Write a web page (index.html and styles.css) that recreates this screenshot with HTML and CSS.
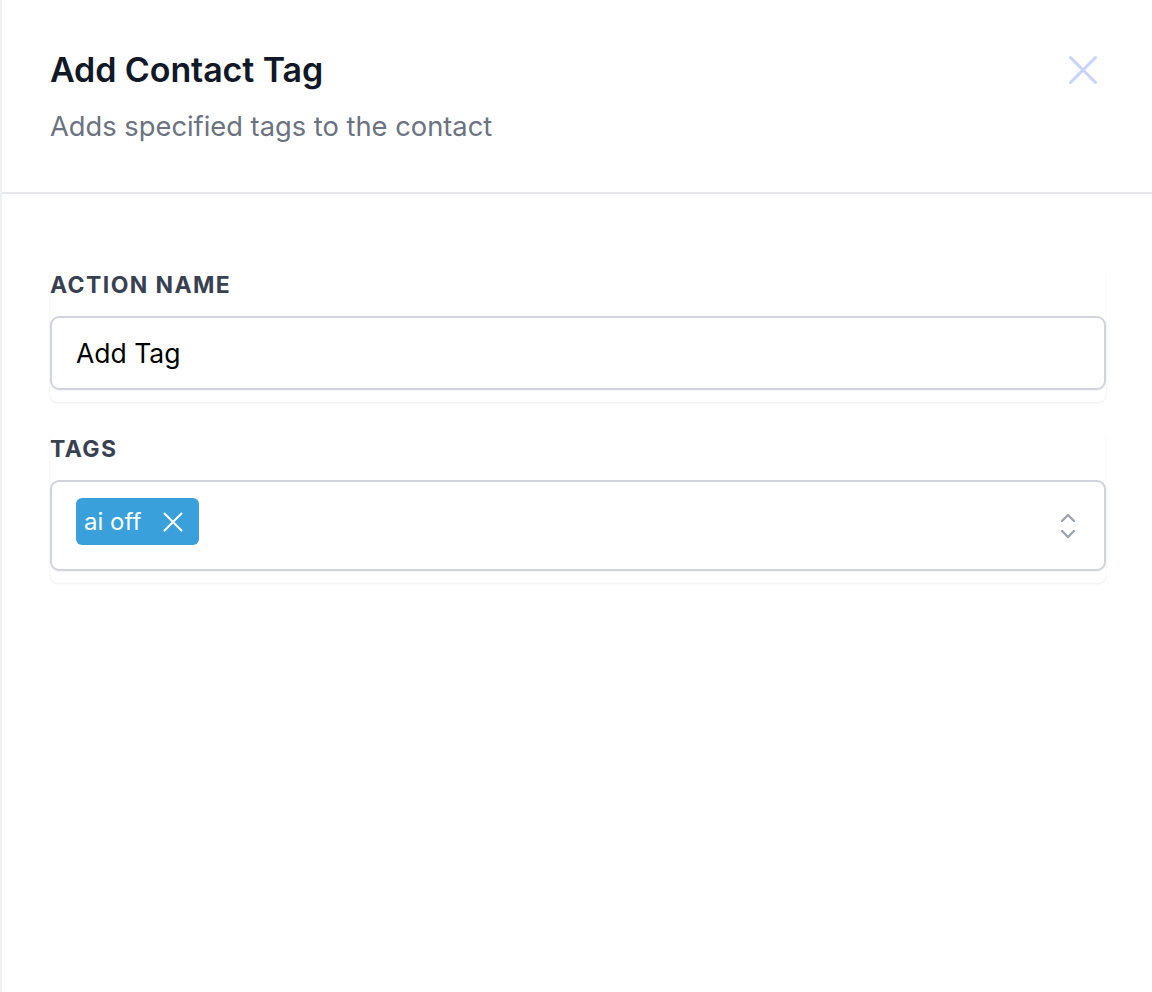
FILE: index.html
```html
<!DOCTYPE html>
<html>
<head>
<meta charset="utf-8">
<link rel="stylesheet" href="styles.css">
</head>
<body>
<div class="panel">
  <header class="head">
    <div class="head-text">
      <h1 class="title">Add Contact Tag</h1>
      <p class="subtitle">Adds specified tags to the contact</p>
    </div>
    <button class="close" aria-label="Close">
      <svg viewBox="0 0 30 30" width="30" height="30"><path d="M2.5 2.5l25 25M27.5 2.5l-25 25" stroke="currentColor" stroke-width="3" stroke-linecap="round" fill="none"/></svg>
    </button>
  </header>
  <main class="body">
    <section class="field">
      <label class="label">Action Name</label>
      <div class="input">Add Tag</div>
    </section>
    <section class="field">
      <label class="label">Tags</label>
      <div class="select">
        <span class="chip">ai off
          <svg class="chip-x" viewBox="0 0 20 20" width="20" height="20"><path d="M1.5 1.5l17 17M18.5 1.5l-17 17" stroke="currentColor" stroke-width="2" stroke-linecap="round" fill="none"/></svg>
        </span>
        <svg class="updown" viewBox="0 0 20 30" width="20" height="30"><path d="M4 10l6-6 6 6M4 20l6 6 6-6" stroke="currentColor" stroke-width="2.4" stroke-linecap="round" stroke-linejoin="round" fill="none"/></svg>
      </div>
    </section>
  </main>
</div>
</body>
</html>
```

FILE: styles.css
```css
* { box-sizing: border-box; }
html, body { margin: 0; padding: 0; background: #ffffff; }
body {
  font-family: Inter, "Noto Sans", "Liberation Sans", sans-serif;
  width: 1152px;
  height: 992px;
  overflow: hidden;
}
.panel {
  height: 992px;
  border-left: 2px solid #eff0f4;
  background: #fff;
}
.head {
  display: flex;
  justify-content: space-between;
  align-items: flex-start;
  padding: 51px 54px 48px 48px;
  border-bottom: 2px solid #e5e7eb;
}
.title {
  margin: 0;
  font-size: 34px;
  line-height: 38px;
  font-weight: 600;
  color: #111827;
  letter-spacing: -0.1px;
}
.subtitle {
  margin: 21px 0 0 0;
  font-size: 27.3px;
  line-height: 34px;
  color: #6b7280;
}
.close {
  border: 0;
  background: none;
  padding: 0;
  margin: 4px 0 0 0;
  color: #c7d2fe;
  display: flex;
}
.body {
  padding: 74px 46px 0 48px;
  display: flex;
  flex-direction: column;
  gap: 30px;
}
.field {
  display: flex;
  flex-direction: column;
  border-radius: 8px;
  box-shadow: 0 1px 3px rgba(0,0,0,0.05), 0 1px 2px rgba(0,0,0,0.03);
  padding: 3px 0 12px 0;
}
.label {
  font-size: 23px;
  line-height: 28px;
  font-weight: 700;
  letter-spacing: 1.4px;
  text-transform: uppercase;
  color: #374151;
  margin: 0 0 17px 0;
}
.input {
  height: 74px;
  border: 2px solid #d1d5db;
  border-radius: 9px;
  padding: 0 24px;
  display: flex;
  align-items: center;
  font-size: 26.5px;
  color: #000;
  box-shadow: 0 1px 2px rgba(0,0,0,0.05);
}
.select {
  height: 91px;
  border: 2px solid #d1d5db;
  border-radius: 9px;
  padding: 16px 24px 0 24px;
  display: flex;
  align-items: flex-start;
  justify-content: space-between;
  box-shadow: 0 1px 2px rgba(0,0,0,0.05);
}
.chip {
  display: inline-flex;
  align-items: center;
  height: 47px;
  padding: 0 16px 0 8px;
  background: #3aa0dc;
  color: #fff;
  border-radius: 6px;
  font-size: 24px;
  gap: 22px;
}
.chip-x { display: block; }
.updown {
  color: #9ca3af;
  margin: 13px 2px 0 0;
}
```
